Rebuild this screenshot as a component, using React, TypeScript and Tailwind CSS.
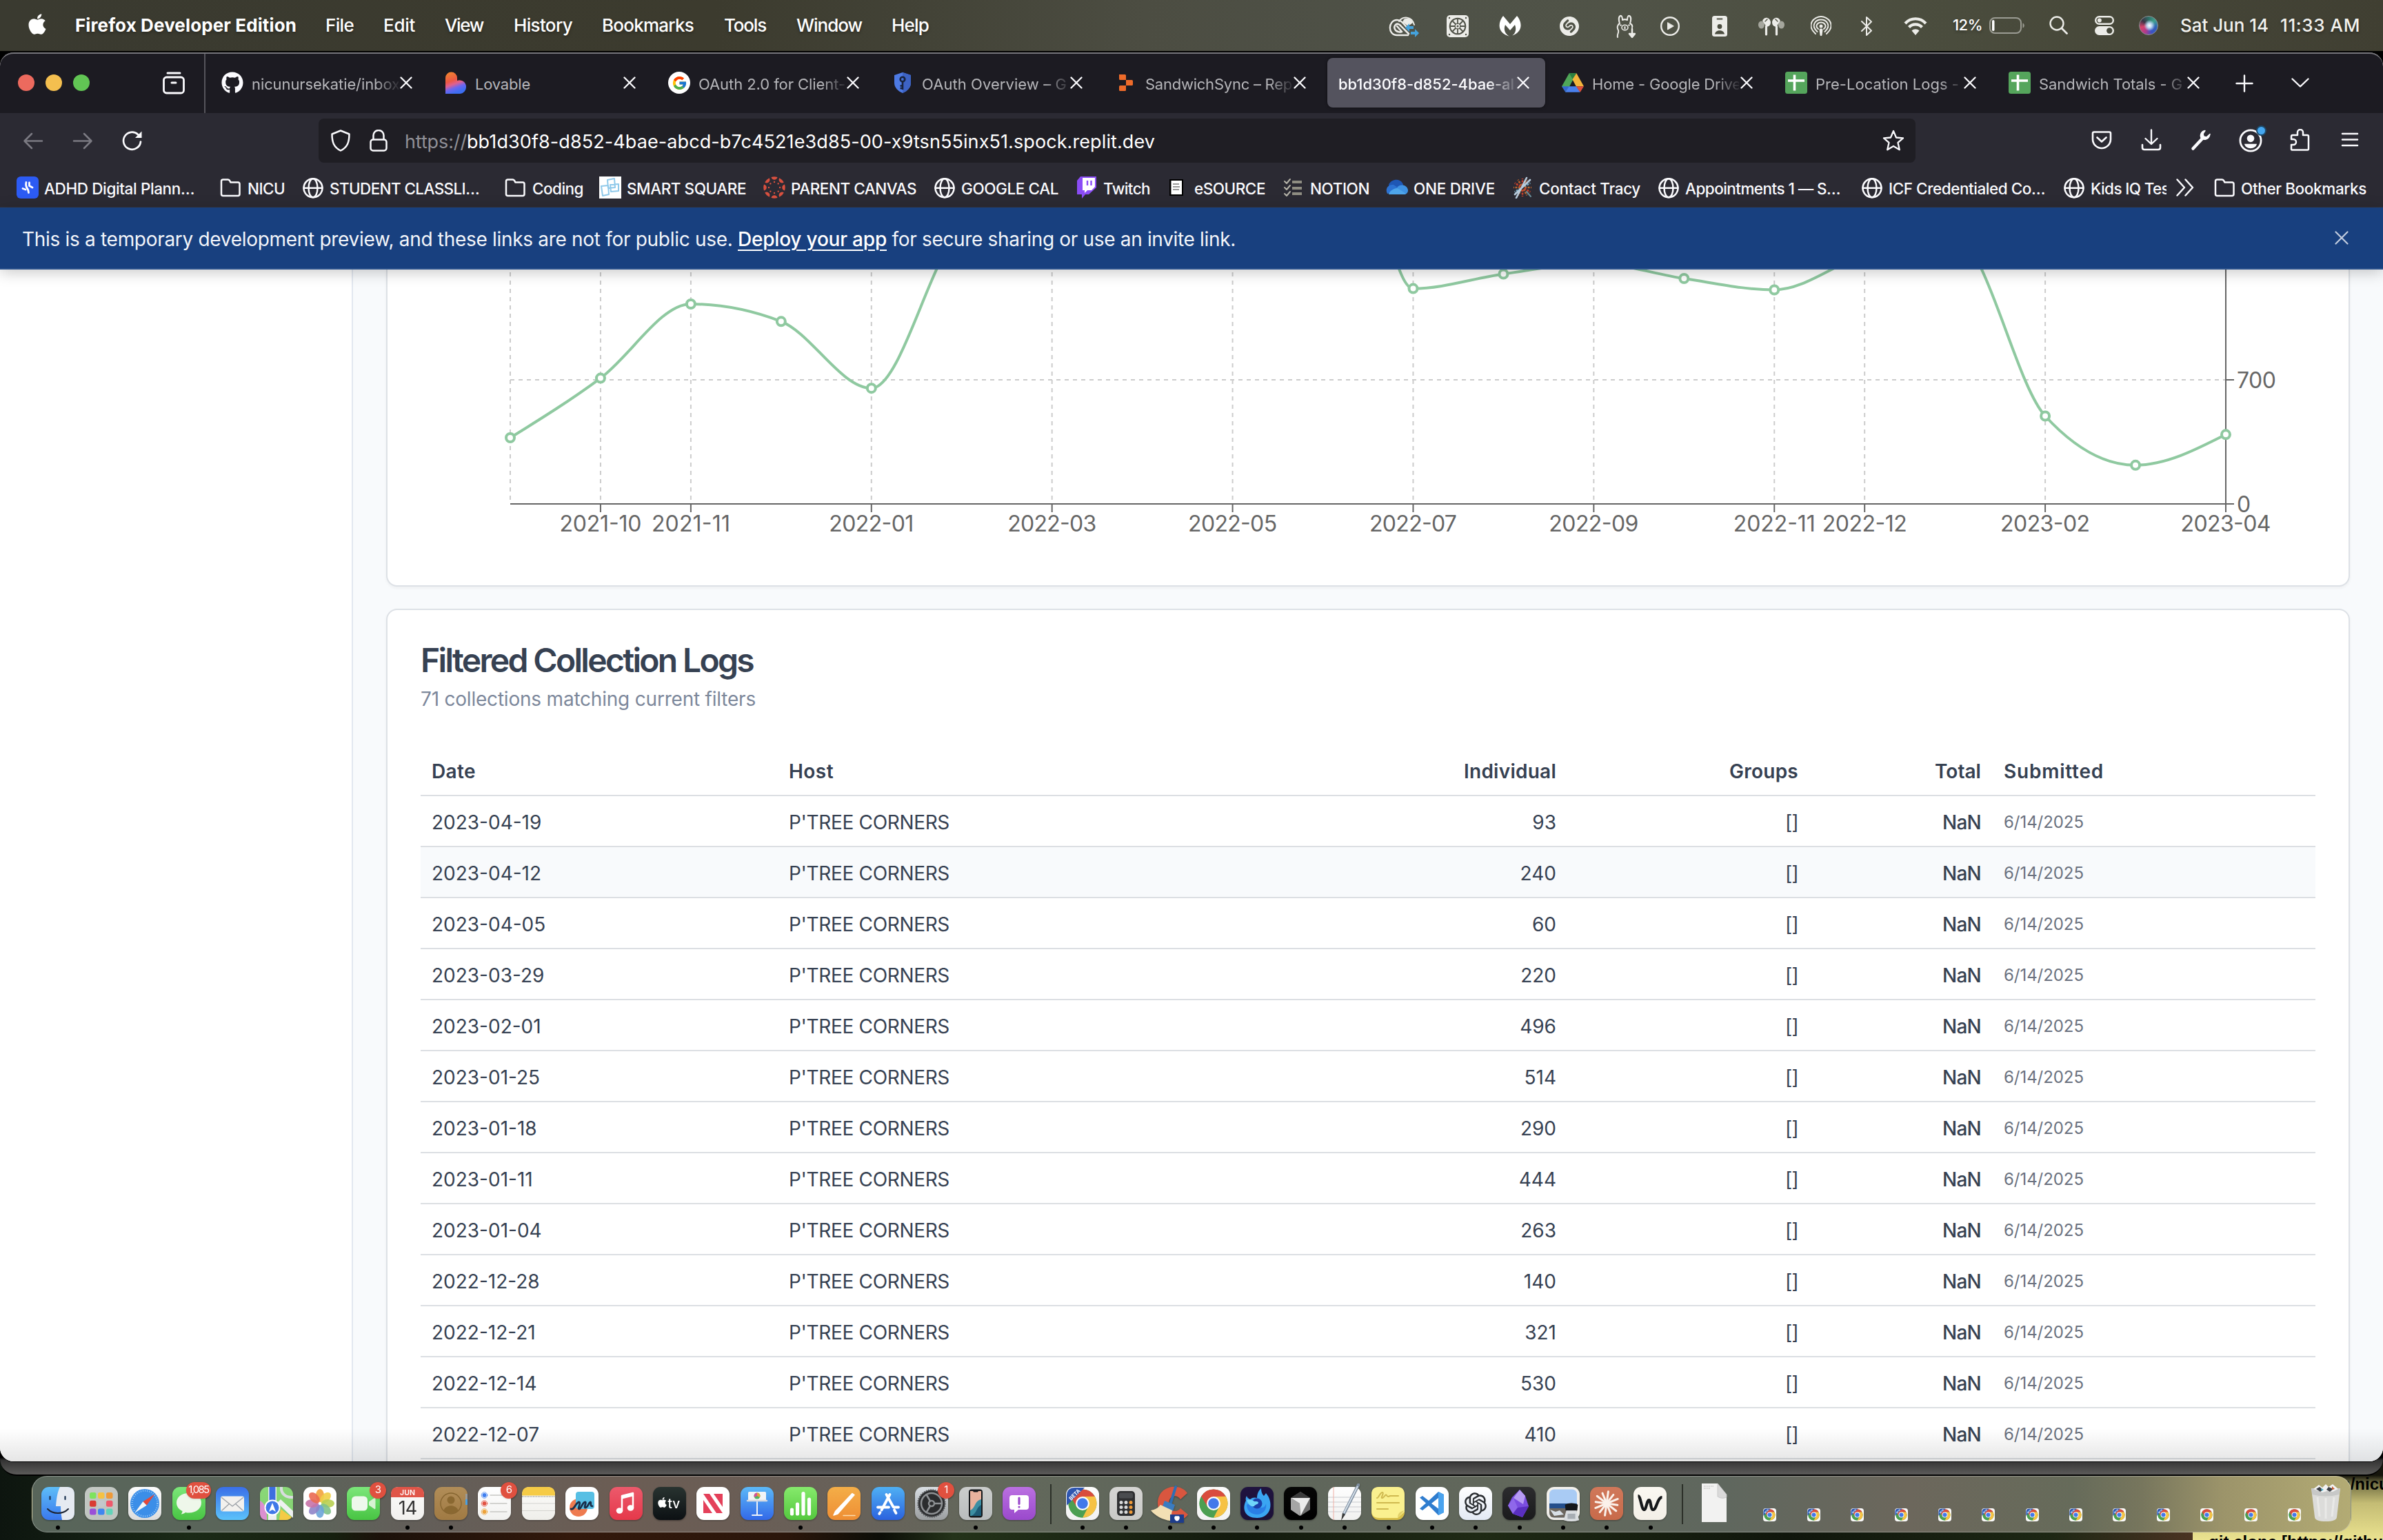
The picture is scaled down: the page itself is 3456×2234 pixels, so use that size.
import React, { useLayoutEffect, useRef, useState } from "react";
import { FaApple, FaGithub } from "react-icons/fa";
import { SiShazam } from "react-icons/si";
import { FcGoogle } from "react-icons/fc";
import { AiOutlineOpenAI } from "react-icons/ai";

/* Text run that tracks itself in or out so that it spans w pixels. */
function Fit({ w, className = "", children }: { w: number; className?: string; children: string }) {
  const ref = useRef<HTMLSpanElement>(null);
  const [ls, setLs] = useState(0);
  useLayoutEffect(() => {
    if (ref.current) setLs((w - ref.current.getBoundingClientRect().width) / children.length);
  }, []);
  return (
    <span ref={ref} style={{ letterSpacing: `${ls}px` }} className={`inline-block shrink-0 whitespace-pre ${className}`}>
      {children}
    </span>
  );
}

type IconProps = { className?: string; children?: React.ReactNode; vb?: string };
const Svg = ({ className = "size-8", children, vb = "0 0 32 32" }: IconProps) => (
  <svg viewBox={vb} className={`block shrink-0 ${className}`} fill="none" strokeLinecap="round" strokeLinejoin="round">
    {children}
  </svg>
);

/* ---------- menu bar ---------- */
const menus: [string, number, string][] = [
  ["File", 41, "w-[84px]"],
  ["Edit", 46, "w-[89px]"],
  ["View", 56, "w-[100px]"],
  ["History", 85, "w-[128px]"],
  ["Bookmarks", 133, "w-[177px]"],
  ["Tools", 61, "w-[105px]"],
  ["Window", 95, "w-[138px]"],
  ["Help", 54, "w-[120px]"],
];

const W = "#ecece8";
const statusIcons: [string, React.ReactNode][] = [
  ["w-[84px]", (
    <Svg className="h-[32px] w-[44px]" vb="0 0 44 32">
      <path d="M15 9C20 1 34 1 37 14" stroke={W} strokeWidth="2" />
      <path d="M22 6c6-3 12 0 13 5l-7 5-8-6z" fill={W} />
      <path d="M28 29H12C-2 29-1 7 12 7c5 0 7 2 16 13" stroke={W} strokeWidth="2.4" />
      <path d="M29 27 16 14c-6-4-10 3-6 8 3 3 6 3 9 2l-7-8" stroke={W} strokeWidth="2.6" />
      <path d="M24 18l6-6v4h6v4h-6v4zM44 26l-6 6v-4h-6v-4h6v-4z" fill="#44a2dc" />
    </Svg>
  )],
  ["w-[76px]", (
    <Svg>
      <rect width="32" height="32" rx="5" fill={W} />
      <circle cx="16" cy="16" r="11.3" stroke="#4f5147" strokeWidth="2" />
      <path d="M16 6v6M16 20v6M6 16h6M20 16h6M9 9l4 4M19 19l4 4M23 9l-4 4M13 19l-4 4" stroke="#4f5147" strokeWidth="1.8" />
      <circle cx="16" cy="16" r="4" stroke="#4f5147" strokeWidth="1.2" />
      <circle cx="16" cy="16" r="1.5" fill="#4f5147" />
      <g fill="#4f5147"><circle cx="4" cy="4" r="1.2" /><circle cx="28" cy="4" r="1.2" /><circle cx="4" cy="28" r="1.2" /><circle cx="28" cy="28" r="1.2" /></g>
    </Svg>
  )],
  ["w-[88px]", (
    <Svg>
      <path d="M6 1C-2 11-3 26 16 31 9 28 6 21 9 14l7 8 7-8c3 7 0 14-5 16C35 25 34 10 26 1L16 13z" fill="#fff" />
    </Svg>
  )],
  ["w-[82px]", <SiShazam className="size-[28px] text-[#ecece8]" />],
  ["w-[64px]", (
    <Svg className="h-[34px] w-[28px]" vb="0 0 28 34">
      <path d="M2 33c-1-5 2-6 1-10-3-5 0-9 2-10-2-6-1-10 1-11 2-1 3 3 3 6 2-1 5-1 7 0 0-3 1-7 3-6 2 1 3 5 1 11 2 1 4 3 3 6" stroke={W} strokeWidth="2" />
      <ellipse cx="12.500" cy="19" rx="4.500" ry="3.800" stroke={W} strokeWidth="1.600" />
      <path d="M12.500 18v2.500" stroke={W} strokeWidth="2" />
      <path d="M6 15.500h1M18 15.500h1" stroke={W} strokeWidth="1.800" />
      <path d="M23 21v9M19 28l4 5 4-5z" stroke={W} strokeWidth="2.500" fill={W} />
    </Svg>
  )],
  ["w-[75px]", (
    <Svg className="size-[28px]" vb="0 0 28 28">
      <circle cx="14" cy="14" r="12.800" stroke={W} strokeWidth="2.400" />
      <path d="M10.500 9v10l8.500-5z" fill={W} stroke={W} />
    </Svg>
  )],
  ["w-[67px]", (
    <Svg className="h-[30px] w-[22px]" vb="0 0 22 30">
      <rect width="22" height="30" rx="3.500" fill={W} />
      <path d="M7.500 4.500h7" stroke="#4b4d40" strokeWidth="1.800" />
      <circle cx="11" cy="15.500" r="3.400" fill="#4b4d40" />
      <path d="M4 26.500c1-7 13-7 14 0z" fill="#4b4d40" />
    </Svg>
  )],
  ["w-[76px]", (
    <Svg className="h-[28px] w-[38px]" vb="0 0 38 28">
      <ellipse cx="4.500" cy="12" rx="4.500" ry="5.500" fill="#a5a69d" />
      <ellipse cx="33.500" cy="12" rx="4.500" ry="5.500" fill="#a5a69d" />
      <path d="M6 6c3-7 11-5 12 2 0 3-1 5-3 6l-3 1zM32 6c-3-7-11-5-12 2 0 3 1 5 3 6l3 1z" fill={W} />
      <path d="M11.500 14v12M26.500 14v12" stroke={W} strokeWidth="3.200" />
      <path d="M10 7l3-3M28 7l-3-3" stroke="#55574a" strokeWidth="1.500" />
    </Svg>
  )],
  ["w-[72px]", (
    <Svg className="size-[30px]" vb="0 0 30 30">
      <path d="M7 26C-8 12 6 1 15 1s23 11 8 25" stroke={W} strokeWidth="2" />
      <path d="M9.500 23C-1 13 8 5.500 15 5.500S31 13 20.500 23" stroke={W} strokeWidth="2" />
      <path d="M11 19c-6-5 0-9.500 4-9.500S25 14 19 19" stroke={W} strokeWidth="2" />
      <circle cx="15" cy="15" r="2.500" fill={W} />
      <path d="M12.500 20c0-2 5-2 5 0l-1 8c-.3 1.500-2.700 1.500-3 0z" fill={W} />
    </Svg>
  )],
  ["w-[63px]", (
    <Svg className="h-[30px] w-[18px]" vb="0 0 18 30">
      <path d="M2 8l14 13.500-7 6.500V2l7 6.500L2 22" stroke={W} strokeWidth="2" />
    </Svg>
  )],
  ["w-[71px]", (
    <Svg className="h-[26px] w-[34px]" vb="0 0 34 26">
      <path d="M2 9c8-9 22-9 30 0M7.500 14.500c5-5.500 14-5.500 19 0" stroke={W} strokeWidth="4.200" strokeLinecap="butt" />
      <path d="M17 26l-5.500-6.500c3-3 8-3 11 0z" fill={W} />
    </Svg>
  )],
];

function MenuBar() {
  return (
    <header className="flex h-[74px] shrink-0 items-center bg-[linear-gradient(90deg,#3a3a30_0%,#3c3b2e_30%,#424236_38%,#4c4d42_48%,#4f5248_60%,#505347_68%,#4a4c3d_82%,#403f32_100%)] pb-[1px] text-[26px] text-white [text-shadow:0_2px_4px_rgba(0,0,0,0.35)]">
      <div className="flex w-[2014px] shrink-0 items-center pl-[39px]">
        <div className="w-[70px]"><FaApple className="size-[34px] -translate-x-[2px] -translate-y-[2px]" /></div>
        <div className="w-[363px]"><Fit w={321} className="font-bold">Firefox Developer Edition</Fit></div>
        {menus.map(([m, w, c]) => <div key={m} className={c}><Fit w={w} className="font-medium">{m}</Fit></div>)}
      </div>
      {statusIcons.map(([c, icon], i) => <div key={i} className={`${c} shrink-0 pt-[2px]`}>{icon}</div>)}
      <div className="w-[53px] shrink-0 text-[22px] font-medium"><Fit w={43}>12%</Fit></div>
      <div className="w-[87px] shrink-0 pt-[1px]">
        <Svg className="h-[24px] w-[52px]" vb="0 0 52 24">
          <rect x="1" y="1" width="45" height="22" rx="7" stroke="#9b9c93" strokeWidth="2" />
          <rect x="4" y="4" width="3.500" height="16" rx="1.700" fill="#fff" />
          <path d="M48.500 8.500c3 1 3 6 0 7z" fill="#9b9c93" />
        </Svg>
      </div>
      <div className="w-[66px] shrink-0">
        <Svg className="size-[27px]" vb="0 0 27 27"><circle cx="11" cy="11" r="9.500" stroke={W} strokeWidth="2.400" /><path d="M18 18l7.500 7.500" stroke={W} strokeWidth="2.800" /></Svg>
      </div>
      <div className="w-[64px] shrink-0">
        <Svg className="size-[28px]" vb="0 0 28 28">
          <rect x="1.200" y="1.200" width="25.600" height="10.600" rx="5.300" stroke={W} strokeWidth="2.400" />
          <circle cx="6.800" cy="6.500" r="3" fill={W} />
          <rect y="15" width="28" height="13" rx="6.500" fill={W} />
          <circle cx="21.300" cy="21.500" r="4.200" fill="#45473a" />
        </Svg>
      </div>
      <div className="w-[60px] shrink-0">
        <div className="size-[28px] rounded-full border border-[#8a8f94] bg-[radial-gradient(circle_at_55%_50%,#ffffff_0%,#b9d4ee_18%,transparent_42%),conic-gradient(from_0deg,#2e6f66,#3fa08e,#2f62b8,#3b52c4,#b03a8c,#d8446c,#3c3346,#2e6f66)]" />
      </div>
      <div className="w-[145px] shrink-0"><Fit w={128} className="font-medium text-[#f2f2ee]">Sat Jun 14</Fit></div>
      <Fit w={116} className="font-medium text-[#f2f2ee]">11:33 AM</Fit>
    </header>
  );
}

/* ---------- tabs ---------- */
const SheetIcon = () => (
  <Svg><rect width="32" height="32" rx="3.500" fill="#55a55c" /><path d="M13.500 4.500v23M4 13h24" stroke="#fff" strokeWidth="3.600" strokeLinecap="butt" /></Svg>
);
const DriveIcon = ({ className = "size-[30px]" }: { className?: string }) => (
  <Svg className={className} vb="0 0 30 30">
    <path d="M10 2h10L10.500 20 5.500 28 0 20z" fill="#4fa658" />
    <path d="M10 2h10l-5 8.500z" fill="#2c8040" />
    <path d="M20 2l10 18H19.500L14.500 10.500z" fill="#f3b43c" />
    <path d="M0 20h10l-5 8z" fill="#3566cf" />
    <path d="M10 20h10l5 8H5z" fill="#4a80ee" />
    <path d="M19.500 20H30l-5 8z" fill="#dd4f3c" />
  </Svg>
);
const favicons: Record<string, React.ReactNode> = {
  github: <FaGithub className="size-8" />,
  lovable: (
    <Svg>
      <defs><linearGradient id="lov" x1="0" y1="0" x2=".35" y2="1"><stop offset="0" stopColor="#f08a2c" /><stop offset=".45" stopColor="#ec5844" /><stop offset=".62" stopColor="#e0608f" /><stop offset=".8" stopColor="#6c66f0" /><stop offset="1" stopColor="#3d6ef2" /></linearGradient></defs>
      <path d="M1 32V9a8.500 8.500 0 0 1 17 0v4a9.500 9.500 0 0 1 13 9c0 5.500-4 10-9.500 10z" fill="url(#lov)" />
    </Svg>
  ),
  google: <div className="flex size-8 items-center justify-center rounded-full bg-white"><FcGoogle className="size-[23px]" /></div>,
  shield: (
    <Svg>
      <path d="M16 1l12 4v11c0 7-5 12-12 15C9 28 4 23 4 16V5z" fill="#4d7ae4" />
      <path d="M16 1l12 4v11c0 7-5 12-12 15z" fill="#3d63c4" />
      <circle cx="16" cy="11" r="3.300" stroke="#18233d" strokeWidth="2.600" />
      <path d="M16 15v11M12.500 20.500H16M12.500 24H16" stroke="#18233d" strokeWidth="2.600" strokeLinecap="butt" />
    </Svg>
  ),
  replit: <Svg><path d="M6 4h8.500q1.500 0 1.500 1.500V12H7.500Q6 12 6 10.500zM16 12h8.500q1.500 0 1.500 1.500v5q0 1.500-1.500 1.500H16zM7.500 20H16v6.500q0 1.500-1.500 1.500h-7Q6 28 6 26.500v-5Q6 20 7.500 20z" fill="#ee6b2a" /></Svg>,
  drive: <DriveIcon className="size-[32px]" />,
  sheet: <SheetIcon />,
};
const tabs: [string, string, number][] = [
  ["github", "nicunursekatie/inbox", 215],
  ["lovable", "Lovable", 80],
  ["google", "OAuth 2.0 for Client-", 213],
  ["shield", "OAuth Overview – G", 210],
  ["replit", "SandwichSync – Rep", 213],
  ["", "bb1d30f8-d852-4bae-al", 255],
  ["drive", "Home - Google Drive", 216],
  ["sheet", "Pre-Location Logs -", 208],
  ["sheet", "Sandwich Totals - G", 208],
];

function TabBar() {
  return (
    <div className="flex h-[88px] shrink-0 items-center bg-[#1c1b22] text-[22px] text-[#fbfbfe]">
      <div className="flex w-[235px] shrink-0 gap-[16px] pl-[26px]">
        <div className="size-6 rounded-full bg-[#ec6a5e]" />
        <div className="size-6 rounded-full bg-[#f4bf4f]" />
        <div className="size-6 rounded-full bg-[#61c554]" />
      </div>
      <Svg className="size-[34px]" vb="0 0 34 34">
        <path d="M8 3h18" stroke="#fbfbfe" strokeWidth="3" />
        <rect x="2.500" y="9" width="29" height="23" rx="4" stroke="#fbfbfe" strokeWidth="2.800" />
        <path d="M14 17h6" stroke="#fbfbfe" strokeWidth="3" />
      </Svg>
      <div className="ml-[27px] h-full w-[2px] shrink-0 bg-[#55545b]" />
      <div className="flex gap-2 pl-[7px]">
        {tabs.map(([icon, title, w], i) => (
          <div key={i} className={`flex h-[72px] w-[316px] shrink-0 items-center rounded-lg ${icon ? "" : "bg-[#54535e] shadow-[0_0_4px_rgba(0,0,0,0.5)]"}`}>
            {icon ? <div className="ml-4 mr-[12px] shrink-0">{favicons[icon]}</div> : <div className="w-[16px] shrink-0" />}
            <div className={`${icon ? "w-[213px] text-[#b6b6ba]" : "w-[257px] font-medium"} flex shrink-0 overflow-hidden pt-[5px] ${icon === "lovable" ? "" : "[mask-image:linear-gradient(to_right,black_84%,transparent_102%)]"}`}>
              <Fit w={w}>{title}</Fit>
            </div>
            <Svg className="ml-[2px] size-[18px]" vb="0 0 18 18"><path d="M1.500 1.500l15 15M16.500 1.500l-15 15" stroke="#fbfbfe" strokeWidth="2.300" /></Svg>
          </div>
        ))}
      </div>
      <Svg className="ml-[29px] mt-[2px] size-[26px]" vb="0 0 26 26"><path d="M13 1.500v23M1.500 13h23" stroke="#fbfbfe" strokeWidth="2.400" /></Svg>
      <Svg className="ml-[55px] h-[14px] w-[26px]" vb="0 0 26 14"><path d="M1.500 1.500L13 12.500l11.500-11" stroke="#fbfbfe" strokeWidth="2.400" /></Svg>
    </div>
  );
}

/* ---------- navigation ---------- */
const L = "#fbfbfe";
const navIcons: React.ReactNode[] = [
  <Svg key="p"><path d="M5 4.500h22q2 0 2 2V15a13 13 0 0 1-26 0V6.500q0-2 2-2z" stroke={L} strokeWidth="2.600" /><path d="M9.500 12.500L16 18.500l6.500-6" stroke={L} strokeWidth="2.600" /></Svg>,
  <Svg key="d"><path d="M16 1.500v20M7.500 14L16 22l8.500-8" stroke={L} strokeWidth="2.400" /><path d="M3 23v4q0 3 3 3h20q3 0 3-3v-4" stroke={L} strokeWidth="2.600" /></Svg>,
  <Svg key="w"><path d="M4.500 28.500L18 14" stroke={L} strokeWidth="4.500" /><path d="M22 2.500c-6 1-8 7-5.500 11 4 3.500 11 2 12.500-6l-5 4.500-4-1-1-4z" fill={L} stroke={L} strokeWidth="1.500" /></Svg>,
  <div key="a" className="relative">
    <Svg className="size-[34px]"><circle cx="16" cy="16" r="14.200" stroke={L} strokeWidth="2.600" /><circle cx="16" cy="13" r="5" fill={L} /><path d="M7.500 20.500h17c-1.500 8-15.500 8-17 0z" fill={L} /></Svg>
    <div className="absolute -right-[6px] -top-[5px] size-[15px] rounded-full border-2 border-[#1e4a6b] bg-[#45a7f0]" />
  </div>,
  <Svg key="e"><path d="M4 30.500q-1 0-1-1.500v-6h3a4 4 0 0 0 0-8H3v-4q0-2 2-2h7V5a4 4 0 0 1 8 0v4h6q2 0 2 2v18q0 1.500-1.500 1.500z" stroke={L} strokeWidth="2.500" /></Svg>,
  <Svg key="m"><path d="M5 7h22M5 15.500h22M5 24h22" stroke={L} strokeWidth="2.500" /></Svg>,
];

function NavBar() {
  return (
    <div className="flex h-[80px] shrink-0 items-center bg-[#2b2a33]">
      <div className="flex w-[462px] shrink-0 pl-[12px]">
        <div className="flex w-[72px] justify-center"><Svg><path d="M29 16.500H4M14 6L3.500 16.500 14 27" stroke="#7b7a82" strokeWidth="2.500" /></Svg></div>
        <div className="flex w-[72px] justify-center"><Svg><path d="M3 16.500h25M18 6l10.500 10.500L18 27" stroke="#7b7a82" strokeWidth="2.500" /></Svg></div>
        <div className="flex w-[72px] justify-center"><Svg><path d="M28 17.500A12.500 12.500 0 1 1 24 7l3 3" stroke={L} strokeWidth="2.700" /><path d="M29.500 2.500v9.500H20z" fill={L} /></Svg></div>
      </div>
      <div className="flex h-[64px] w-[2316px] shrink-0 items-center rounded-lg bg-[#1f1e24] text-[27px]">
        <Svg className="ml-[16px] size-8"><path d="M16 1.500L3.500 6.500C3.500 18 6 25.500 16 30.500 26 25.500 28.500 18 28.500 6.500z" stroke={L} strokeWidth="2.500" /></Svg>
        <Svg className="ml-[23px] size-8"><path d="M8.500 14V8.500a7.500 7.500 0 0 1 15 0V14" stroke={L} strokeWidth="2.500" /><rect x="4.500" y="14.500" width="23" height="16" rx="3.500" stroke={L} strokeWidth="2.500" /></Svg>
        <div className="ml-[22px] flex-1 pt-[4px]">
          <Fit w={90} className="text-[#8f8f96]">https://</Fit>
          <Fit w={998} className="text-white">bb1d30f8-d852-4bae-abcd-b7c4521e3d85-00-x9tsn55inx51.spock.replit.dev</Fit>
        </div>
        <Svg className="mr-[16px] size-8"><path d="M16 2l4 9.500 10 .8-7.500 6.600 2.300 10.300L16 24l-8.800 5.200 2.300-10.300L2 12.300l10-.8z" stroke={L} strokeWidth="2.300" /></Svg>
      </div>
      <div className="ml-[234px] flex">
        {navIcons.map((n, i) => <div key={i} className="flex w-[72px] shrink-0 justify-center">{n}</div>)}
      </div>
    </div>
  );
}

/* ---------- bookmarks ---------- */
const Folder = () => <Svg><path d="M5.500 4h7q1.500 0 2.300 1.200L16.500 8H27q2.500 0 2.500 2.500V25q0 2.500-2.500 2.500H5.500Q3 27.500 3 25V6.500Q3 4 5.500 4z" stroke={L} strokeWidth="2.500" transform="translate(-1 .5)" /></Svg>;
const Globe = () => <Svg><g stroke={L} strokeWidth="2.500" transform="translate(0 .8)"><circle cx="16" cy="16" r="13.500" /><ellipse cx="16" cy="16" rx="6.500" ry="13.500" /><path d="M2.500 16h27" /></g></Svg>;
const burst = Array.from({ length: 12 }, (_, i) => i * 30);
const bookmarks: [string, React.ReactNode, string, number][] = [
  ["w-[295px]", <Svg><rect width="32" height="32" rx="6" fill="#2c5bf4" /><path d="M14 8.500c-1 4 0 7 2 9.500 1 2 1.500 3.500 1.500 5.500M9 17.500l4 1.500M18.500 9v4.500l4.500 2.500" stroke="#fff" strokeWidth="2.800" /></Svg>, "ADHD Digital Plann…", 218],
  ["w-[119px]", <Folder />, "NICU", 54],
  ["w-[294px]", <Globe />, "STUDENT CLASSLI…", 217],
  ["w-[137px]", <Folder />, "Coding", 74],
  ["w-[238px]", <Svg><path d="M0 0h32v32H0z" fill="#fff" /><g stroke="#8fc9ea" strokeWidth="2"><path d="M12 5l10-2 1 13-10 1zM3 14l10-1 1 13-9 2zM16 12l12-1v10l-11 1z" /></g></Svg>, "SMART SQUARE", 173],
  ["w-[247px]", <Svg>{[0, 45, 90, 135, 180, 225, 270, 315].map((a) => <g key={a} transform={`rotate(${a} 16 16)`}><path d="M11.500 1a15 15 0 0 1 9 0c-1 5-8 5-9 0z" fill="#d8503f" /><circle cx="16" cy="8" r="1.200" fill="#d8503f" /></g>)}</Svg>, "PARENT CANVAS", 182],
  ["w-[206px]", <Globe />, "GOOGLE CAL", 141],
  ["w-[132px]", <Svg><path d="M2 6l5-6h23v16L19 26h-5l-5 6v-6H2z" fill="#8b4cf6" /><path d="M10 2h18v13l-5 5h-6l-4 4v-4h-3z" fill="#fff" /><path d="M17 6v7M22.500 6v7" stroke="#8b4cf6" strokeWidth="2.400" strokeLinecap="butt" /></Svg>, "Twitch", 68],
  ["w-[168px]", <Svg><path d="M4 4h20v24H4z" fill="#000" /><path d="M6.500 6h15.500v20H6.500z" fill="#fff" /><path d="M9 11h9M9 15h10M9 19h9" stroke="#999" strokeWidth="2" strokeLinecap="butt" /></Svg>, "eSOURCE", 103],
  ["w-[150px]", <Svg><path d="M14 8h14M14 17h14M14 25h14" stroke="#8f8d82" strokeWidth="4" strokeLinecap="butt" /><path d="M3 7l3 3 5-6M3 16l3 3 5-6M3 25l3 3 5-6" stroke="#b5b3a8" strokeWidth="2" /></Svg>, "NOTION", 86],
  ["w-[182px]", <Svg><path d="M4 12C8 3 22 2 25 12l-8 8-12-2z" fill="#1f57b5" /><path d="M2 25c-4-8 2-14 9-13l12 8z" fill="#2c72d2" /><path d="M16 16c5-6 15-4 16 4 0 4-3 6-6 6z" fill="#3f92e2" /><path d="M4 26c0-4 8-10 13-9l12 8q-1 1-3 1z" fill="#4ea5ea" /></Svg>, "ONE DRIVE", 118],
  ["w-[212px]", <Svg>{burst.map((a, i) => <path key={a} d="M16 13V3" transform={`rotate(${a} 16 16)`} stroke={i === 2 || i === 8 ? "#6fa3bb" : i % 2 ? "#b8632f" : "#c8402b"} strokeWidth="2.600" strokeDasharray="3 1.500" strokeLinecap="butt" />)}<path d="M22 2L7 31M27 5L5 26" stroke="#b8cbdc" strokeWidth="2.600" /><path d="M22 22l6 7" stroke="#6b8f9a" strokeWidth="2" /></Svg>, "Contact Tracy", 147],
  ["w-[295px]", <Globe />, "Appointments 1 — S…", 225],
  ["w-[293px]", <Globe />, "ICF Credentialed Co…", 227],
];

function BookmarkBar() {
  return (
    <div className="flex h-[57px] shrink-0 items-center border-b border-[#33323b] bg-[#2b2a33] pl-[24px] text-[22.500px] font-medium text-[#fbfbfe]">
      {bookmarks.map(([c, icon, label, w]) => (
        <div key={label} className={`flex shrink-0 items-center gap-[8px] ${c}`}>
          {icon}
          <Fit w={w} className="pt-[3px]">{label}</Fit>
        </div>
      ))}
      <div className="flex w-[161px] shrink-0 items-center gap-[8px]">
        <Globe />
        <div className="w-[110px] overflow-hidden pt-[3px]"><Fit w={121}>Kids IQ Test</Fit></div>
      </div>
      <Svg className="ml-[2px] mr-[28px] size-[28px]" vb="0 0 28 28"><path d="M2.500 2.500L13 14 2.500 25.500M14.500 2.500L25 14 14.500 25.500" stroke={L} strokeWidth="2.500" /></Svg>
      <Folder />
      <Fit w={182} className="ml-[7px] pt-[3px]">Other Bookmarks</Fit>
    </div>
  );
}

function PreviewBanner() {
  return (
    <div className="relative z-10 flex h-[90px] shrink-0 items-center border-b-2 border-[#2c528c] bg-[#18407f] pl-[32px] text-[28px] text-[#f2f5fa] shadow-[0_4px_20px_rgba(0,0,0,0.22)]">
      <Fit w={1038} className="pt-[3px]">{"This is a temporary development preview, and these links are not for public use. "}</Fit>
      <Fit w={216} className="pt-[3px] font-medium text-white underline decoration-2 underline-offset-[5px]">Deploy your app</Fit>
      <Fit w={506} className="pt-[3px]"> for secure sharing or use an invite link.</Fit>
      <Svg className="ml-auto mr-[50px] size-[20px]" vb="0 0 20 20"><path d="M1.500 1.500l17 17M18.500 1.500l-17 17" stroke="#c3cddf" strokeWidth="2.200" /></Svg>
    </div>
  );
}

/* ---------- chart ---------- */
const X0 = 740;
const STEP = 2488 / 19;
const ys = [635, 548.6, 441, 466.3, 563.2, 333, 285, 300, -180, -80, 418.6, 397.5, 382, 404, 420.5, 370, 345, 603.5, 674.8, 630.3];
const px = (i: number) => X0 + i * STEP;

/* Monotone cubic interpolation through the monthly totals. */
function monotonePath() {
  const n = ys.length;
  const s = ys.slice(1).map((y, i) => y - ys[i]);
  const m = ys.map((_, i) => {
    if (i === 0 || i === n - 1) return 0;
    const a = s[i - 1];
    const b = s[i];
    return (Math.sign(a) + Math.sign(b)) * Math.min(Math.abs(a), Math.abs(b), 0.25 * Math.abs(a + b));
  });
  m[0] = (3 * s[0] - m[1]) / 2;
  m[n - 1] = (3 * s[n - 2] - m[n - 2]) / 2;
  let d = `M${X0} ${ys[0]}`;
  for (let i = 0; i < n - 1; i++) {
    d += `C${px(i) + STEP / 3} ${ys[i] + m[i] / 3} ${px(i + 1) - STEP / 3} ${ys[i + 1] - m[i + 1] / 3} ${px(i + 1)} ${ys[i + 1]}`;
  }
  return d;
}
const xTicks: [number, string, number][] = [
  [1, "2021-10", 119], [2, "2021-11", 114], [4, "2022-01", 123], [6, "2022-03", 129], [8, "2022-05", 129], [10, "2022-07", 127],
  [12, "2022-09", 130], [14, "2022-11", 119], [15, "2022-12", 123], [17, "2023-02", 130], [19, "2023-04", 131],
];

function Chart() {
  return (
    <svg viewBox="562 391 2844 457" className="block h-[457px] w-[2844px] font-['Inter',sans-serif] text-[32px]">
      <g stroke="#cccccc" strokeWidth="2" strokeDasharray="6 6">
        {[0, ...xTicks.map((t) => t[0])].slice(0, -1).map((i) => <path key={i} d={`M${px(i)} 359V730`} />)}
        <path d="M740 551H3228" />
      </g>
      <g stroke="#666666" strokeWidth="2">
        <path d="M740 731H3228M3228 391V731M3228 551h12M3228 731h12" />
        {xTicks.map(([i]) => <path key={i} d={`M${px(i)} 731v12`} />)}
      </g>
      <g fill="#666666">
        {xTicks.map(([i, t, w]) => <text key={t} x={px(i)} y="771" textAnchor="middle" textLength={w}>{t}</text>)}
        <text x="3244" y="563" textLength="57">700</text>
        <text x="3244" y="743">0</text>
      </g>
      <path d={monotonePath()} fill="none" stroke="#8fc9a0" strokeWidth="4" />
      {ys.map((y, i) => (y > 392 ? <circle key={i} cx={px(i)} cy={y} r="6" fill="#fff" stroke="#8fc9a0" strokeWidth="4" /> : null))}
    </svg>
  );
}

/* ---------- table ---------- */
const logs: [string, number][] = [
  ["2023-04-19", 93], ["2023-04-12", 240], ["2023-04-05", 60], ["2023-03-29", 220], ["2023-02-01", 496], ["2023-01-25", 514], ["2023-01-18", 290],
  ["2023-01-11", 444], ["2023-01-04", 263], ["2022-12-28", 140], ["2022-12-21", 321], ["2022-12-14", 530], ["2022-12-07", 410],
];
const cols = "grid grid-cols-[518px_832px_281px_351px_265px_1fr] items-center h-[74px] border-b-2 border-[#dcdfe3] pl-4 pt-[3px]";

function LogsCard() {
  return (
    <section className="mt-8 h-[1400px] rounded-2xl border-2 border-[#dde1e6] bg-white px-12 pt-12 shadow-[0_2px_4px_rgba(0,0,0,0.05)]">
      <h3 className="pt-[2px] text-[48px] font-semibold leading-[46px] text-[#364152]"><Fit w={482}>Filtered Collection Logs</Fit></h3>
      <p className="pt-[14px] text-[28px] leading-[38px] text-[#7d889b]"><Fit w={486}>71 collections matching current filters</Fit></p>
      <div className="mt-12 w-[2748px] text-[28px] text-[#364152]">
        <div className={`${cols} font-semibold`}>
          <Fit w={64} className="justify-self-start">Date</Fit>
          <Fit w={65} className="justify-self-start">Host</Fit>
          <Fit w={134} className="justify-self-end">Individual</Fit>
          <Fit w={100} className="justify-self-end">Groups</Fit>
          <Fit w={67} className="justify-self-end">Total</Fit>
          <div className="pl-[33px]"><Fit w={145}>Submitted</Fit></div>
        </div>
        {logs.map(([d, n], i) => (
          <div key={d} className={`${cols} ${i === 1 ? "bg-[#f8fafc]" : ""}`}>
            <span>{d}</span>
            <Fit w={233} className="justify-self-start">P'TREE CORNERS</Fit>
            <span className="text-right">{n}</span>
            <Fit w={19} className="justify-self-end">[]</Fit>
            <Fit w={56} className="justify-self-end font-medium">NaN</Fit>
            <div className="pl-[33px] text-[24px] text-[#6b7280]"><Fit w={116}>6/14/2025</Fit></div>
          </div>
        ))}
      </div>
    </section>
  );
}

/* ---------- dock ---------- */
const D = ({ children, bg = "#fff", bg2 }: { children?: React.ReactNode; bg?: string; bg2?: string }) => {
  const id = `g${bg.slice(1)}${(bg2 || bg).slice(1)}`;
  return (
    <svg viewBox="0 0 48 48" className="block size-[48px]" fill="none" strokeLinecap="round" strokeLinejoin="round">
      <defs><linearGradient id={id} x1="0" y1="0" x2="0" y2="1"><stop offset="0" stopColor={bg} /><stop offset="1" stopColor={bg2 || bg} /></linearGradient></defs>
      <rect width="48" height="48" rx="11" fill={`url(#${id})`} />
      {children}
    </svg>
  );
};
const ChromeMark = ({ beta = false }: { beta?: boolean }) => (
  <>
    <circle cx="24" cy="24" r="20.500" fill="#4c9f52" />
    <path d="M6.200 13.800A20.500 20.500 0 0 1 41.800 13.800L24 15 14.500 29z" fill="#d94c3d" />
    <path d="M41.800 13.800A20.500 20.500 0 0 1 24 44.500L32.500 28 24 14z" fill="#f6c244" />
    <path d="M6.200 13.800L15.500 29 24 33l8.500-5L24 44.500A20.500 20.500 0 0 1 6.200 13.800z" fill="#4c9f52" />
    <circle cx="24" cy="24" r="10" fill="#fff" />
    <circle cx="24" cy="24" r="7.800" fill="#4379ea" />
    {beta && <path d="M1 13Q1 1 13 1h14L1 27z" fill="#2f56b0" />}
    {beta && <text x="14" y="14" fontSize="7.500" fontWeight="700" fill="#fff" textAnchor="middle" transform="rotate(-45 13 13)">BETA</text>}
  </>
);
const petals = ["#f2a33c", "#f0cf47", "#b8cf52", "#7fc28a", "#6ba4d8", "#8f84c8", "#c873a8", "#ea6a52"];
const padColors = ["#7ee35e", "#f5c242", "#ee9a38", "#d93c34", "#c3c8cc", "#ee5a6c", "#9a4fd8", "#3f86f0", "#62d3b8"];

const dockApps: [React.ReactNode, boolean, string?][] = [
  [<D bg="#5ebdf7" bg2="#3a78ee"><path d="M27 0h10q11 0 11 11v26q0 11-11 11h-7c-1-6-2-12-2-20h-7C22 14 24 6 27 0z" fill="#e6eaf1" /><path d="M12.500 14v4M34.500 14v4" stroke="#1d3350" strokeWidth="2.200" /><path d="M9 32c8 8 22 8 30 0" stroke="#1d2433" strokeWidth="2" /></D>, true],
  [<D bg="#c3c8c3" bg2="#bfc5c0">{padColors.map((c, i) => <rect key={i} x={7 + (i % 3) * 12} y={8 + Math.floor(i / 3) * 11.700} width="9.500" height="9" rx="2.500" fill={c} />)}</D>, false],
  [<D bg="#fdfdfd" bg2="#dcdcdc"><circle cx="24" cy="24" r="21" fill="#3b8ee8" /><circle cx="24" cy="24" r="18.500" stroke="#a9d3f8" strokeWidth="2.500" strokeDasharray="0.800 2.300" strokeLinecap="butt" /><path d="M38.500 10.500L26.700 26.700 21.300 21.300z" fill="#e5483a" /><path d="M9.500 37.500L21.300 21.300 26.700 26.700z" fill="#f4f6f8" /></D>, false],
  [<D bg="#7ce77a" bg2="#48c443"><path d="M24 9c11 0 18 6 18 14s-7 14.500-18 14.500c-2 0-3.500-.2-5-.6-2 1.500-4 2.500-6.500 2.600 1.500-1.500 2-3 2-4.500C9 32.500 6 28 6 23 6 15 13 9 24 9z" fill="#eef7ea" /></D>, true, "1,085"],
  [<D bg="#3a6fe8" bg2="#5cc2fa"><rect x="7" y="13.500" width="34" height="22" rx="3" fill="#f3f1ee" /><path d="M8.500 15.500L24 28l15.500-12.500M9 34l10.500-9.500M39 34l-10.500-9.500" stroke="#a0a4aa" strokeWidth="1.500" /></D>, false],
  [<D bg="#8ad878" bg2="#84d272"><path d="M12 0h12v48H12zM25 23l23 22V35L30 18z" fill="#eef0f1" /><path d="M13.500 0h9v34h-9z" fill="#3d6ee0" /><path d="M0 20c6 3 10 10 10 28Q0 48 0 37z" fill="#dc8fd0" /><path d="M28 48l2-16 16 12q-3 4-9 4z" fill="#f4cb46" /><path d="M31 0c-1 9 6 16 17 15" stroke="#d9dcdf" strokeWidth="4" /><circle cx="18" cy="30" r="11.500" fill="#fff" /><circle cx="18" cy="30" r="9.500" fill="#3f78e8" /><path d="M18 23l5 13-5-3-5 3z" fill="#fff" /></D>, false],
  [<D>{petals.map((c, i) => <ellipse key={c} cx="24" cy="12.500" rx="6" ry="9.500" fill={c} fillOpacity=".9" transform={`rotate(${i * 45} 24 24)`} />)}</D>, false],
  [<D bg="#7ce77a" bg2="#48c443"><rect x="7" y="13.500" width="23" height="21" rx="5.500" fill="#eef8ec" /><path d="M32 21.500l8-5.500q1.500-.5 1.500 1v14q0 1.500-1.500 1l-8-5.500z" fill="#d8f3d2" /></D>, false, "3"],
  [<D bg="#fbfbfa" bg2="#f1f0ee"><path d="M0 15V11Q0 0 11 0h26q11 0 11 11v4z" fill="#e05548" /><text x="24" y="11.800" fontSize="10.500" fontWeight="600" fill="#fff" textAnchor="middle">JUN</text><text x="24" y="40" fontSize="27" fill="#333" textAnchor="middle" letterSpacing="-1">14</text></D>, true],
  [<D bg="#b18d58" bg2="#a07a43"><path d="M45 10h3v8h-3z" fill="#999" /><path d="M45 18h3v8h-3z" fill="#4aa0e0" /><circle cx="24" cy="24" r="15" stroke="#856430" strokeWidth="1.400" /><circle cx="24" cy="19" r="5.500" fill="#8a6831" /><path d="M13.500 34c3-9 18-9 21 0-5 6-16 6-21 0z" fill="#8a6831" /></D>, true],
  [<D bg="#ffffff" bg2="#f1f1ef">{["#3f7ff0", "#e25344", "#eda33c"].map((c, i) => <g key={c}><circle cx="9.500" cy={12 + i * 12} r="3" fill={c} /><circle cx="9.500" cy={12 + i * 12} r="4.300" stroke={c} strokeWidth=".8" /><path d={`M18 ${12 + i * 12}h24`} stroke="#c6c6c4" strokeWidth="1.300" /></g>)}</D>, false, "6"],
  [<D bg="#fcfcfa" bg2="#efeeea"><path d="M0 12.500V11Q0 0 11 0h26q11 0 11 11v1.500z" fill="#f6cb46" /><path d="M0 14h48" stroke="#8b8778" strokeWidth="1.300" strokeDasharray="1 1.300" strokeLinecap="butt" /><path d="M0 24h48M0 34.500h48" stroke="#d4d3cf" strokeWidth="1" /></D>, false],
  [<D><circle cx="19" cy="30" r="13" fill="#ee7b50" /><rect x="15" y="7" width="27" height="25" rx="4" fill="#57bfe4" /><path d="M8 32c5 2 7-10 12-10 3 1-3 10 0 10s5-11 9-10c2 1-3 8 0 8 4 0 4-7 7-8 2 0-1 6 3 6" stroke="#1a2f4a" strokeWidth="2.800" /></D>, false],
  [<D bg="#ec5a6c" bg2="#e5384a"><path d="M18 34V13l16-4v21" stroke="#fff" strokeWidth="2.500" /><path d="M18 12.500l16-4v5l-16 4z" fill="#fff" /><ellipse cx="14.500" cy="34.500" rx="4.800" ry="4.200" fill="#fff" /><ellipse cx="30.500" cy="30.500" rx="4.800" ry="4.200" fill="#fff" /></D>, false],
  [<div className="relative"><D bg="#283330" bg2="#0c1013"><text x="21.500" y="30.500" fontSize="19" fontWeight="500" fill="#fff">tv</text></D><FaApple className="absolute left-[5px] top-[14px] size-[17px] text-white" /></div>, false],
  [<D><path d="M10 10h9l19 28h-9z" fill="#e4405a" /><path d="M10 19v19h13zM38 29V10H25z" fill="#e4405a" /></D>, false],
  [<D bg="#5cb9f8" bg2="#3268e8"><rect x="11" y="7" width="26" height="14" rx="1.500" fill="#f3f4f6" /><path d="M10 20h28" stroke="#d6dae0" strokeWidth="2.500" /><circle cx="24" cy="13" r="4.500" fill="#52b460" /><path d="M24 13V8.500a4.500 4.500 0 0 1 4 6.500z" fill="#e8a33c" /><path d="M24 13V8.500a4.500 4.500 0 0 0-4 6.500z" fill="#d94f9a" /><path d="M24 22v18M17 41h14" stroke="#eef2f8" strokeWidth="2" /></D>, false],
  [<D bg="#86ea6c" bg2="#54c83e"><path d="M11.500 33v6M19.500 25v14M28 9.500V39M36.500 18v21" stroke="#fff" strokeWidth="5.200" /></D>, true],
  [<D bg="#f4ae48" bg2="#ee8e34"><path d="M36 9.500l3 2L15 39l-6 2 2.500-5.500z" fill="#fff" stroke="#fff" strokeWidth="1.500" /><path d="M23 41.500h17" stroke="#fbdcae" strokeWidth="1.500" /></D>, false],
  [<D bg="#4fb0f4" bg2="#2b62de"><g stroke="#fff" strokeWidth="3.800"><path d="M21.500 11l10 18M26.500 11L14.500 33.500" /><path d="M9 29.500h16M32.500 29.500H39M33 33.500l2.500 4.500M12.500 37l-1.300 2" /></g></D>, false],
  [<D bg="#d9dee3" bg2="#9a9d9f"><circle cx="24" cy="24" r="19.500" fill="#2b2c2e" stroke="#55575a" strokeWidth="2.500" strokeDasharray="1.600 1.600" strokeLinecap="butt" /><circle cx="24" cy="24" r="15" stroke="#8d9093" strokeWidth="2.500" /><circle cx="24" cy="24" r="4" stroke="#8d9093" strokeWidth="2.500" /><path d="M28 24h11M22 27.500l-5.500 9.500M22 20.500L16.500 11" stroke="#8d9093" strokeWidth="2.500" /></D>, false, "1"],
  [<D bg="#cbcdcc" bg2="#b9bcbd"><rect x="14" y="3.500" width="20" height="41" rx="4" fill="#16191c" /><path d="M16 6h16v22c-8 0-10 6-16 8z" fill="#e8b29d" /><path d="M16 34c8-3 6-14 16-16v24H16z" fill="#3d8fa3" /><path d="M18 42c8-4 7-13 14-16v16z" fill="#1d5b76" /><rect x="20.500" y="5" width="7" height="2.500" rx="1.200" fill="#16191c" /></D>, true],
  [<D bg="#bb70e2" bg2="#9a49cc"><path d="M14 12h20q4 0 4 4v13q0 4-4 4H23l-6 5v-5h-3q-4 0-4-4V16q0-4 4-4z" fill="#fff" /><path d="M24 16v8.500M24 29v.1" stroke="#9a49cc" strokeWidth="3.200" /></D>, false],
];

const dockRunning: React.ReactNode[] = [
  <D bg="#fdfdfd" bg2="#f2f2f2"><ChromeMark beta /></D>,
  <D bg="#d5d5d3" bg2="#c9c9c7"><rect x="11" y="6" width="26" height="36" rx="5" fill="#2e2f31" /><rect x="14" y="8.500" width="20" height="8" rx="2" fill="#4a4c4f" />{Array.from({ length: 9 }, (_, i) => <circle key={i} cx={17 + (i % 3) * 7} cy={22.500 + Math.floor(i / 3) * 7} r="2.500" fill={i % 3 === 2 ? "#f09a37" : "#d8d9da"} />)}</D>,
  <svg viewBox="0 0 58 56" className="block h-[56px] w-[58px]" fill="none"><path d="M55 13C46-2 13 0 12 27c0 26 32 34 44 17L45 35c-5 7-17 5-17-7s12-14 17-6z" fill="#d9563f" /><path d="M38 4L30 30" stroke="#2e6fb4" strokeWidth="4" strokeLinecap="round" /><path d="M22 24l15 6-3 9-15-7z" fill="#3b7cc0" /><path d="M16 30l17 8-3 15C20 52 8 46 2 38c6-1 10-3 14-8z" fill="#f2dfb4" /><rect x="30" y="44" width="20" height="12" fill="#1e3d8c" /><path d="M40 46.500c3-1 5 1 3 5q-3 4-6 0c-2-4 0-6 3-5z" fill="#fff" /></svg>,
  <D bg="#fcfcfc" bg2="#f3f3f3"><ChromeMark /></D>,
  <D bg="#20133f" bg2="#1b1138"><path d="M8 20c-1-3 0-5 1-7 1 3 3 4 5 5 3-3 7-3 10-2 0-6 2-10 6-14 0 6 2 9 4 11l3-4c11 12 9 36-13 36C6 45 2 31 8 20z" fill="#3aa5f2" /><path d="M9 27c1 8 7 13 15 13s15-7 13-16c-1 5-4 6-7 6-6 0-3-7-12-7-4 0-8 1-9 4z" fill="#2a7fe6" /><circle cx="24" cy="24" r="7.500" fill="#1b3fa8" /><path d="M9 19c5-1 9 0 11 2 3 0 6 0 6 2-1 3-5 2-6 5-3 1-8 0-11-9z" fill="#6fd5fa" /></D>,
  <D bg="#060606" bg2="#000"><path d="M24 7l14 9v17l-14 9-14-9V16z" fill="#6e6e6e" /><path d="M24 7l14 9-14 8-14-8z" fill="#3c3c3c" /><path d="M10 16h28L24 42l-1-18z" fill="#ececec" /><path d="M10 16l13 8v18l-13-9z" fill="#a5a5a5" /></D>,
  <div className="relative"><D bg="#fefefe" bg2="#f1f1f0"><path d="M0 15h48M0 22h48M0 29h48M0 36h48" stroke="#c9cbcf" strokeWidth="1" /><path d="M8 0v48" stroke="#efb0a6" strokeWidth="1" /></D><svg viewBox="0 0 28 56" className="absolute -top-[5px] left-[18px] h-[56px] w-[28px]" fill="none"><path d="M26 2L5 44" stroke="#7f8fa0" strokeWidth="4.500" strokeLinecap="round" /><path d="M25 4L5 43" stroke="#d5e0ea" strokeWidth="1.800" /><path d="M3 43l-2 11 6-9z" fill="#3a3a3a" /></svg></div>,
  <D bg="#e6d25c" bg2="#d6bd48"><path d="M0 11Q0 0 11 0h26q11 0 11 11v25L38 45H11Q0 45 0 34z" fill="#faf08f" /><path d="M48 34L38 45c0-6 2-9 10-11z" fill="#e3d16a" /><path d="M8 16c2 1 5-9 8-8s-4 9 0 8c3-1 4-6 6-4 1 3 3 2 5 1h12M8 23h32M8 32h16" stroke="#cfb950" strokeWidth="2" /></D>,
  <D><path d="M33 7l8 4v26l-8 4-14-14-9 7-4-2.500 9-8-9-8L10 13l9 7z" fill="#2f7dcf" /><path d="M33 7l8 4v26l-8 4z" fill="#4aa3ee" /><path d="M33 16v15.500L23 24z" fill="#fff" /></D>,
  <div className="flex size-[48px] items-center justify-center rounded-[11px] bg-gradient-to-b from-white to-[#e3e9f4]"><AiOutlineOpenAI className="size-[42px] text-[#2c2f33]" /></div>,
  <D bg="#2c2c2e" bg2="#1a1a1c"><path d="M25 4l8 9 5 15-9 16-14-5-7-12 6-12z" fill="#7b4ee0" /><path d="M25 4l8 9-3 12-14-9z" fill="#b79bf4" /><path d="M16 16l6 14-7 9-7-12z" fill="#8f68ea" /><path d="M22 30l16-2-9 16-14-5z" fill="#5a2fc0" /></D>,
  <div className="relative"><D bg="#f4f1ec" bg2="#eceae6"><rect x="4" y="3.500" width="40" height="41" rx="7" fill="#a9cbf4" /><path d="M4 24h40v8H4z" fill="#234e8c" /><path d="M4 31h40v6q0 7.500-7 7.500H11q-7 0-7-7.500z" fill="#6c665e" /><path d="M5 33l8 3 6-2 6 6-14 2z" fill="#d8dfe6" /></D><svg viewBox="0 0 28 30" className="absolute -bottom-[3px] -right-[2px] h-[28px] w-[28px]"><path d="M4 3q10-5 20 0l-1 9H5z" fill="#15171a" /><path d="M6 12h16l4 15q-12 4-24 0z" fill="#dadde0" /><path d="M8 17h12v8H8z" fill="#a7adb3" /></svg></div>,
  <D bg="#d0785a" bg2="#c86a4a">{Array.from({ length: 12 }, (_, i) => <path key={i} d={`M24 24V${i % 2 ? 8 : 6.500}`} transform={`rotate(${i * 30 + 8} 24 24)`} stroke="#fbf1ea" strokeWidth="3" />)}</D>,
  <D bg="#fbf8f2" bg2="#f3efe7"><path d="M6.500 13c4 0 5 20 9 20 3 0 4-14 7-14s2 14 6 14c5 0 6-18 13-18" stroke="#16181a" strokeWidth="4.200" strokeLinecap="butt" /></D>,
];

const slot = "flex h-[81px] w-[63.380px] shrink-0 items-center justify-center relative";
const Dot = () => <div className="absolute bottom-[4px] left-[29px] size-[6px] rounded-full bg-black" />;

function Dock() {
  return (
    <div className="relative ml-[46px] flex h-[82px] w-[3364px] shrink-0 rounded-[22px] border border-white/30 bg-[linear-gradient(90deg,#58655a_0%,#5b655a_11%,#625e59_16%,#6b5d54_25%,#6a5d55_30%,#67625a_36%,#62685b_42%,#5f665b_52%,#61675b_65%,#5f675e_73%,#6c675c_81%,#666b5a_88%,#77765d_91%,#9c946a_94.500%,#b3ab74_100%)] pl-[5px]">
      {dockApps.map(([icon, on, badge], i) => (
        <div key={i} className={slot}>
          <div className="relative -mt-[4px] drop-shadow-[0_1px_1px_rgba(0,0,0,0.35)]">
            {icon}
            {badge && (
              <div className={`absolute -top-[7px] flex h-6 items-center justify-center rounded-full bg-[#e0503f] text-[15px] text-white shadow-sm ${badge.length > 1 ? "-right-[8px] w-9" : "-right-[9px] w-6"}`}>
                {badge.length > 1 ? <Fit w={29}>{badge}</Fit> : badge}
              </div>
            )}
          </div>
          {on && <Dot />}
        </div>
      ))}
      <div className="flex w-[28.300px] shrink-0 items-center justify-center"><div className="h-[58px] w-[2px] bg-[#2c3029]" /></div>
      {dockRunning.map((icon, i) => (
        <div key={i} className={slot}>
          <div className="-mt-[4px] drop-shadow-[0_1px_1px_rgba(0,0,0,0.35)]">{icon}</div>
          <Dot />
        </div>
      ))}
      <div className="flex w-[28.700px] shrink-0 items-center justify-center"><div className="h-[58px] w-[2px] bg-[#2c3029]" /></div>
      <div className={slot}>
        <svg viewBox="0 0 38 56" className="-mt-[6px] h-[56px] w-[38px]" fill="none"><path d="M1 0h23l13 16v40H1z" fill="#f2f2f1" /><path d="M24 0v19q6 4 13 1V16z" fill="#dadada" stroke="#c2c2c2" strokeWidth=".8" /><path d="M4 4h14M4 7h10" stroke="#b5b5b5" strokeWidth="1" strokeDasharray="1.500 1" /></svg>
      </div>
      {Array.from({ length: 13 }, (_, i) => (
        <div key={i} className={`${slot} pl-[36px]`}>
          <svg viewBox="0 0 48 48" className="mt-[29px] size-[19px]"><rect width="48" height="48" rx="10" fill="#fafafa" /><ChromeMark beta={i < 10} /></svg>
        </div>
      ))}
      <div className={slot}>
        <svg viewBox="0 0 44 56" className="-mt-[5px] h-[56px] w-[44px]" fill="none">
          <path d="M1 7h42l-5 42q-1 6-16 6T6 49z" fill="#dcdcda" />
          <path d="M1 7h42l-1.500 9q-20 5-39 0z" fill="#c7c8c7" />
          <path d="M4 8l8-6 5 4 5-5 4 4 6-4 8 7-8 4-8-1-7 2z" fill="#f2f2f2" />
          <path d="M8 8l5-3 5 4-4 3zM26 5l7 3-5 4-5-3z" fill="#3d4046" />
          <path d="M15 7l4 2-3 2z" fill="#4fb6d0" /><path d="M31 4l4 4-4 1z" fill="#c65a2e" />
          <path d="M10 20l3 28M22 21v30M34 20l-3 28" stroke="#f1f1f0" strokeWidth="3" strokeOpacity=".6" />
        </svg>
      </div>
    </div>
  );
}

export default function App() {
  return (
    <div className="relative flex h-[2234px] w-[3456px] flex-col overflow-hidden bg-[linear-gradient(90deg,#0d150f_0%,#1b2a17_8%,#16200f_14%,#1c110a_16%,#33190c_24%,#2b160b_33%,#0c0e08_37%,#24331a_40%,#131a0e_52%,#1f2a15_62%,#10160c_75%,#1d2714_86%,#4a3322_92%)] font-['Inter','Liberation_Sans',sans-serif]">
      <div className="absolute bottom-0 right-0 h-[134px] w-[276px] overflow-hidden bg-[linear-gradient(180deg,#15150c_0%,#15150c_30%,#6f6c42_38%,#c4bc74_60%,#ebe390_100%)] font-['Liberation_Sans',sans-serif] text-[24px] font-bold leading-none text-black">
        <div className="mt-[41px] whitespace-nowrap pl-[214px]">n/nicu</div>
        <div className="mt-[60px] whitespace-nowrap pl-[23px]"><Fit w={268}>git clone [https://github</Fit></div>
      </div>
      <MenuBar />
      <div className="relative flex h-[2067px] shrink-0 flex-col rounded-b-[24px] border-b-2 border-black bg-[linear-gradient(180deg,#000_0%,#000_98.800%,#333_99%,#5c5b5a_100%)] pt-[2px]">
        <div className="flex h-[2044px] flex-col overflow-hidden rounded-[20px] bg-white shadow-[0_0_0_1px_#000]">
          <TabBar />
          <NavBar />
          <BookmarkBar />
          <PreviewBanner />
          <div className="relative flex min-h-0 flex-1 overflow-hidden">
            <aside className="w-[512px] shrink-0 border-r-2 border-[#e2e8f0] bg-white" />
            <main className="h-full w-[2944px] bg-[#f8fafc] px-12">
              <section className="h-[460px] rounded-b-2xl border-2 border-t-0 border-[#dde1e6] bg-white shadow-[0_2px_4px_rgba(0,0,0,0.05)]">
                <Chart />
              </section>
              <LogsCard />
            </main>
            <div className="absolute inset-x-0 bottom-0 h-[48px] bg-gradient-to-t from-black/10 to-transparent" />
          </div>
        </div>
        <div className="pointer-events-none absolute inset-x-0 top-[2px] h-[2044px] rounded-[20px] border-t-2 border-[#77767c]" />
      </div>
      <Dock />
    </div>
  );
}
